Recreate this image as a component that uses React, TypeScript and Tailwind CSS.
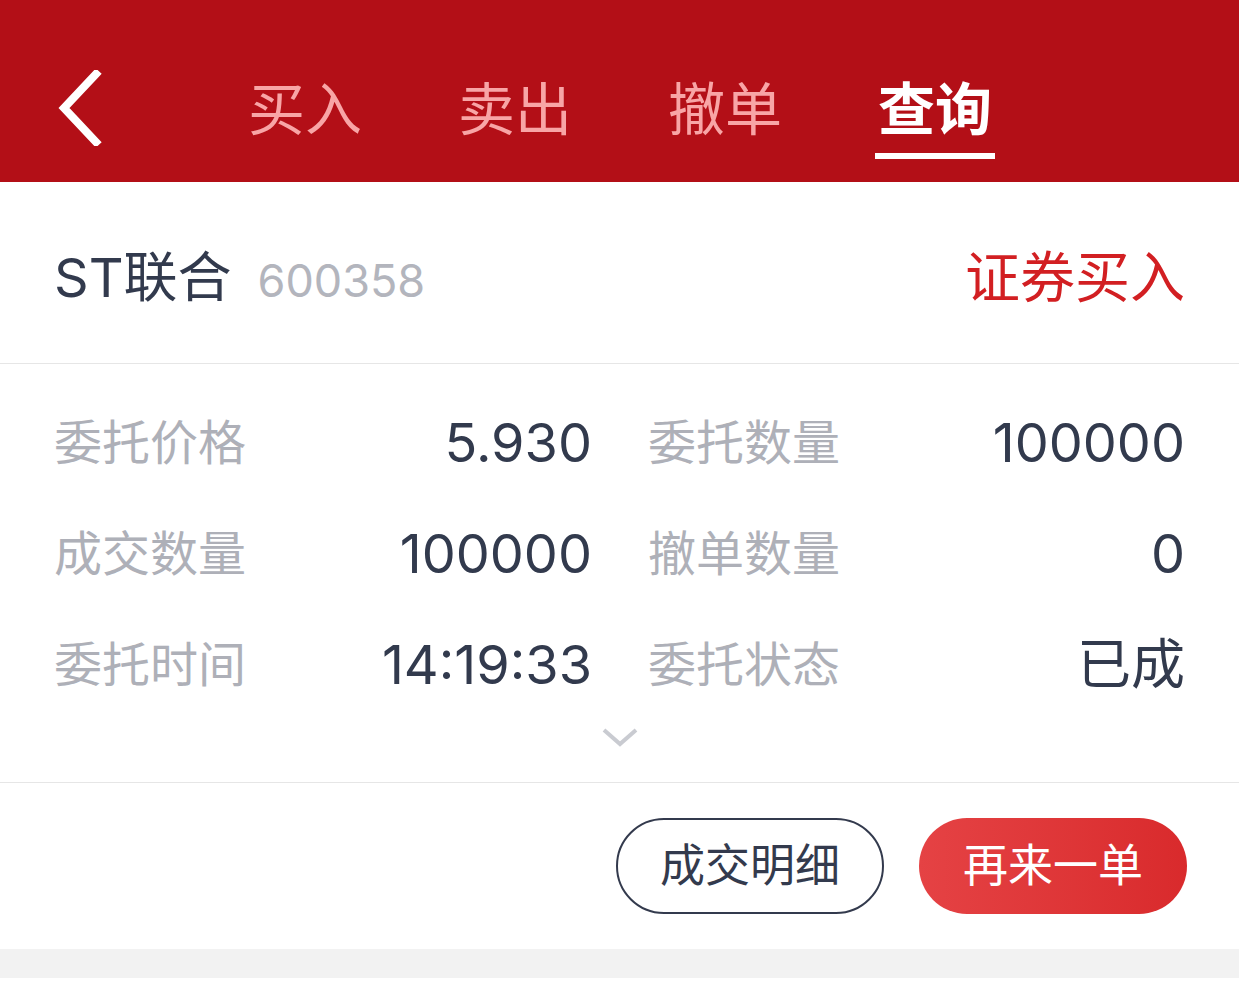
const cjk = "font-['Inter','Noto_Sans_CJK_SC',sans-serif]";

const tabs = ["买入", "卖出", "撤单", "查询"];

const details: [string, string, string, string][] = [
  ["委托价格", "5.930", "委托数量", "100000"],
  ["成交数量", "100000", "撤单数量", "0"],
  ["委托时间", "14:19:33", "委托状态", "已成"],
];

export default function App() {
  return (
    <div className={`w-[1239px] h-[1003px] bg-white ${cjk}`}>
      {/* Header */}
      <div className="h-[182px] bg-[#b30f17] flex items-center relative">
        <div className="absolute left-[56px] top-[70px]">
          <svg width="48" height="76" viewBox="0 0 48 76" fill="none">
            <path d="M40 4 L8 38 L40 72" stroke="#fff" strokeWidth="8" strokeLinecap="square" strokeLinejoin="miter" />
          </svg>
        </div>
        <div className="flex ml-[245px] gap-[90px] mt-[56px]">
          {tabs.map((t, i) => (
            <div key={t} className="w-[120px] flex flex-col items-center">
              <span
                className={
                  i === 3
                    ? "text-[57px] leading-[62px] font-bold text-white"
                    : "text-[57px] leading-[62px] text-[#f8a5a6]"
                }
              >
                {t}
              </span>
              <div className={i === 3 ? "mt-[12px] h-[6px] w-[120px] bg-white" : "mt-[12px] h-[6px] w-[120px]"} />
            </div>
          ))}
        </div>
      </div>

      {/* Stock row */}
      <div className="h-[182px] flex items-center justify-between pl-[54px] pr-[54px] pt-[10px] border-b border-[#e6e6e6]">
        <div className="flex items-baseline gap-[26px]">
          <span className="text-[54px] text-[#323a4d]">ST联合</span>
          <span className="text-[45px] text-[#b3b5bd]">600358</span>
        </div>
        <span className="text-[55px] text-[#d21f22]">证券买入</span>
      </div>

      {/* Details */}
      <div className="pt-[23px] pl-[54px] pr-[54px] border-b border-[#e6e6e6]">
        {details.map(([l1, v1, l2, v2]) => (
          <div key={l1} className="h-[111px] flex items-center">
            <span className="w-[194px] text-[48px] text-[#aeb0b8]">{l1}</span>
            <span className="w-[344px] text-right text-[54px] text-[#323a4d]">{v1}</span>
            <span className="ml-[56px] w-[194px] text-[48px] text-[#aeb0b8]">{l2}</span>
            <span className="flex-1 text-right text-[54px] text-[#323a4d]">{v2}</span>
          </div>
        ))}
        <div className="flex justify-center h-[62px] pt-[6px]">
          <svg width="40" height="22" viewBox="0 0 40 22" fill="none">
            <path d="M4 4 L20 18 L36 4" stroke="#c9cbd1" strokeWidth="4" />
          </svg>
        </div>
      </div>

      {/* Actions */}
      <div className="h-[166px] flex items-center justify-end gap-[35px] pr-[52px]">
        <button className="w-[268px] h-[96px] rounded-full border-2 border-[#333a4d] text-[45px] text-[#333a4d]">
          成交明细
        </button>
        <button className="w-[268px] h-[96px] rounded-full bg-gradient-to-r from-[#e54244] to-[#d92a2c] text-[45px] text-white">
          再来一单
        </button>
      </div>
      <div className="h-[29px] bg-[#f2f2f2]" />
    </div>
  );
}
